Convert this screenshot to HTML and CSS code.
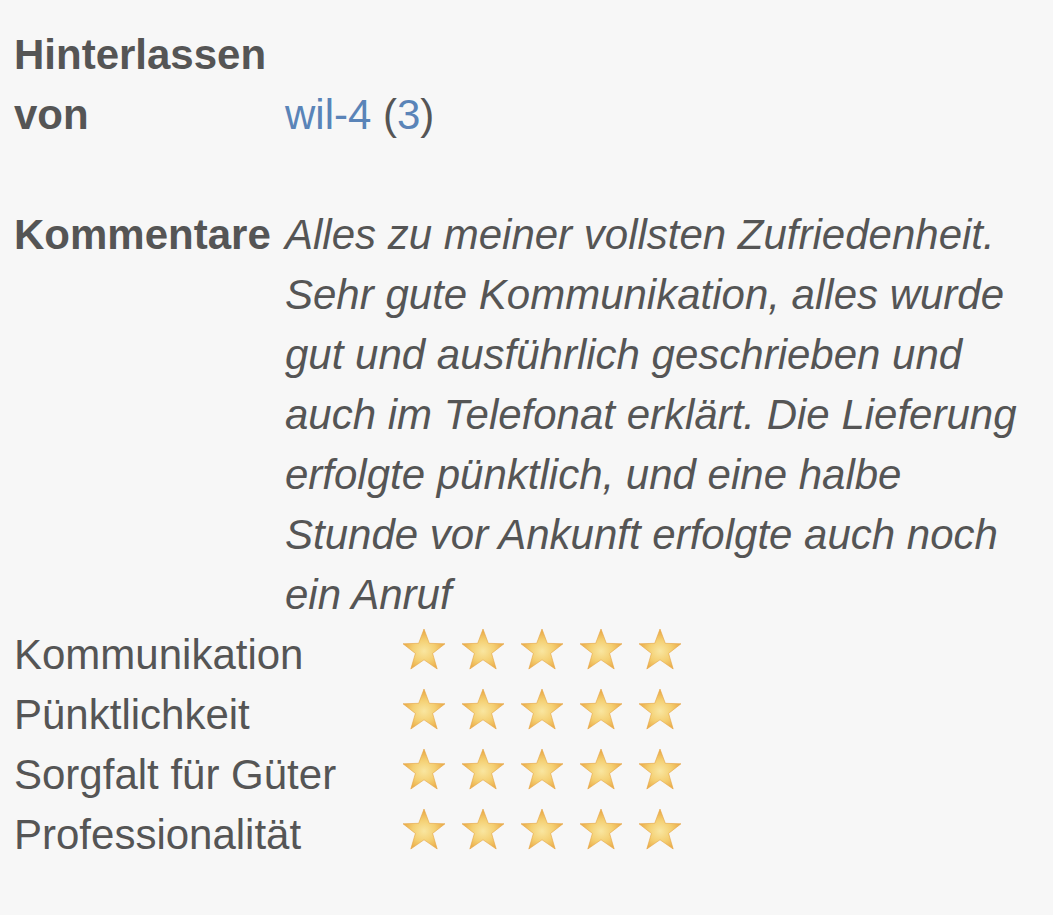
FILE: index.html
```html
<!DOCTYPE html>
<html lang="de">
<head>
<meta charset="utf-8">
<link rel="stylesheet" href="styles.css">
</head>
<body>
<svg width="0" height="0" class="defs" aria-hidden="true">
  <defs>
    <radialGradient id="sg" cx="50%" cy="55%" r="55%">
      <stop offset="0%" stop-color="#f9e6a0"/>
      <stop offset="50%" stop-color="#f4cf72"/>
      <stop offset="100%" stop-color="#e8a440"/>
    </radialGradient>
    <symbol id="star" viewBox="0 0 44 42">
      <path d="M22 1 L27.3 15.3 L43 15.8 L30.6 25.4 L35.2 41 L22 31.8 L8.8 41 L13.4 25.4 L1 15.8 L16.7 15.3 Z" fill="url(#sg)" stroke="#e6a543" stroke-width="0.6" stroke-linejoin="round"/>
    </symbol>
  </defs>
</svg>
<div class="page">
  <div class="info">
    <div class="label">Hinterlassen von</div>
    <div class="value bottom"><span><a class="link" href="#">wil-4</a> (<a class="link" href="#">3</a>)</span></div>
    <div class="label">Kommentare</div>
    <div class="value comment">Alles zu meiner vollsten Zufriedenheit. Sehr gute Kommunikation, alles wurde gut und ausführlich geschrieben und auch im Telefonat erklärt. Die Lieferung erfolgte pünktlich, und eine halbe Stunde vor Ankunft erfolgte auch noch ein Anruf</div>
  </div>
  <div class="ratings">
    <div class="rlabel">Kommunikation</div>
    <div class="stars"><svg class="star"><use href="#star"/></svg><svg class="star"><use href="#star"/></svg><svg class="star"><use href="#star"/></svg><svg class="star"><use href="#star"/></svg><svg class="star"><use href="#star"/></svg></div>
    <div class="rlabel">Pünktlichkeit</div>
    <div class="stars"><svg class="star"><use href="#star"/></svg><svg class="star"><use href="#star"/></svg><svg class="star"><use href="#star"/></svg><svg class="star"><use href="#star"/></svg><svg class="star"><use href="#star"/></svg></div>
    <div class="rlabel">Sorgfalt für Güter</div>
    <div class="stars"><svg class="star"><use href="#star"/></svg><svg class="star"><use href="#star"/></svg><svg class="star"><use href="#star"/></svg><svg class="star"><use href="#star"/></svg><svg class="star"><use href="#star"/></svg></div>
    <div class="rlabel">Professionalität</div>
    <div class="stars"><svg class="star"><use href="#star"/></svg><svg class="star"><use href="#star"/></svg><svg class="star"><use href="#star"/></svg><svg class="star"><use href="#star"/></svg><svg class="star"><use href="#star"/></svg></div>
  </div>
</div>
</body>
</html>
```

FILE: styles.css
```css
html, body {
  margin: 0;
  padding: 0;
  background: #f7f7f7;
}
body {
  font-family: "Liberation Sans", Arial, Helvetica, sans-serif;
  font-size: 42px;
  line-height: 60px;
  color: #555555;
}
.defs {
  position: absolute;
  width: 0;
  height: 0;
}
.page {
  padding: 25px 14px 0 14px;
}
.info {
  display: grid;
  grid-template-columns: 271px 1fr;
  row-gap: 60px;
}
.label {
  font-weight: bold;
}
.value.bottom {
  display: flex;
  align-items: flex-end;
}
.value.comment {
  font-style: italic;
}
.link {
  color: #5a84b8;
  text-decoration: none;
}
.ratings {
  display: grid;
  grid-template-columns: 388px 1fr;
}
.stars {
  display: flex;
  gap: 15px;
  padding-top: 3px;
}
.star {
  width: 44px;
  height: 42px;
}
```
